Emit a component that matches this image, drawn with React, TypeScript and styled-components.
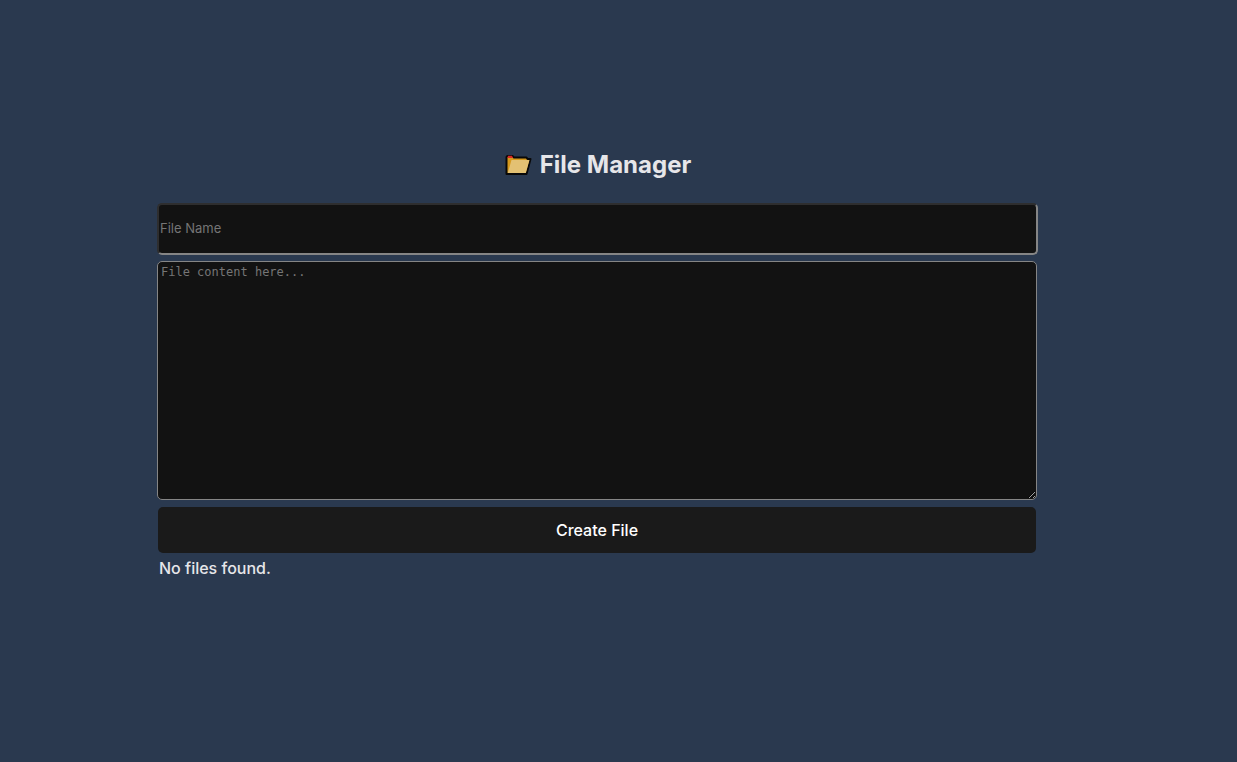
import React, { useState } from "react";
import styled, { createGlobalStyle } from "styled-components";

const GlobalStyle = createGlobalStyle`
  *, *::before, *::after { box-sizing: border-box; }
  body {
    margin: 0;
    background: #2a394f;
    color: #e6e6e9;
    font-family: Inter, sans-serif;
    font-size: 16px;
    line-height: 24px;
  }
`;

const Page = styled.main`
  display: flex;
  justify-content: center;
  align-items: center;
  min-height: 100vh;
  padding: 0 42px 36px 0;
`;

const Panel = styled.section`
  flex: 0 1 881px;
  min-width: 0;
  color-scheme: dark;
`;

const Title = styled.h1`
  display: flex;
  justify-content: center;
  align-items: center;
  gap: 8px;
  margin: 0 0 20px;
  font-size: 24px;
  line-height: 36px;
  font-weight: 700;
`;

const FolderIcon = styled.svg`
  display: block;
  width: 28px;
  height: 22px;
`;

const Form = styled.form`
  display: flex;
  flex-direction: column;
`;

const NameInput = styled.input`
  height: 52px;
  margin-bottom: 6px;
  padding: 0 1px 1px;
  border: 2px solid;
  border-color: #2e2e2f #858585 #858585 #2e2e2f;
  border-radius: 5px;
  background: #121212;
  color: #e6e6e9;
  font: 400 13px/20px Inter, sans-serif;
  &::placeholder { color: #757575; opacity: 1; }
`;

const ContentArea = styled.textarea`
  height: 239px;
  margin: 0 1px 7px 0;
  padding: 2px 3px;
  border: 1px solid #858585;
  border-radius: 5px;
  background: #121212;
  color: #e6e6e9;
  font: 12px/16px "DejaVu Sans Mono", monospace;
  resize: vertical;
  &::placeholder { color: #757575; opacity: 1; }
`;

const CreateButton = styled.button`
  height: 46px;
  margin: 0 2px 3px 1px;
  border: 0;
  border-radius: 5px;
  background: #1a1a1a;
  color: #ffffff;
  font: 500 16px/24px Inter, sans-serif;
  cursor: pointer;
`;

const Status = styled.p`
  margin: 0;
  padding-left: 2px;
  font-weight: 500;
`;

export default function App() {
  const [name, setName] = useState("");
  const [content, setContent] = useState("");

  return (
    <>
      <GlobalStyle />
      <Page>
        <Panel>
          <Title>
            <FolderIcon viewBox="0 0 28 22" aria-hidden="true">
              <path d="M2.500 20V3.500Q2.500 2 4 2H8.500L10 3.500H22.500L23.500 5H26.500L22.500 20Z" fill="#d79a1d" stroke="#090909" strokeWidth="2" strokeLinejoin="round" />
              <path d="M4 1.700H8L9 4H3.500Z" fill="#d92a24" />
              <path d="M7.500 6H25.500L21.800 19H3.800Z" fill="#e3c173" />
            </FolderIcon>
            File Manager
          </Title>
          <Form onSubmit={(e) => e.preventDefault()}>
            <NameInput aria-label="File Name" placeholder="File Name" value={name} onChange={(e) => setName(e.target.value)} />
            <ContentArea aria-label="File content" placeholder="File content here..." value={content} onChange={(e) => setContent(e.target.value)} />
            <CreateButton type="submit">Create File</CreateButton>
          </Form>
          <Status>No files found.</Status>
        </Panel>
      </Page>
    </>
  );
}
